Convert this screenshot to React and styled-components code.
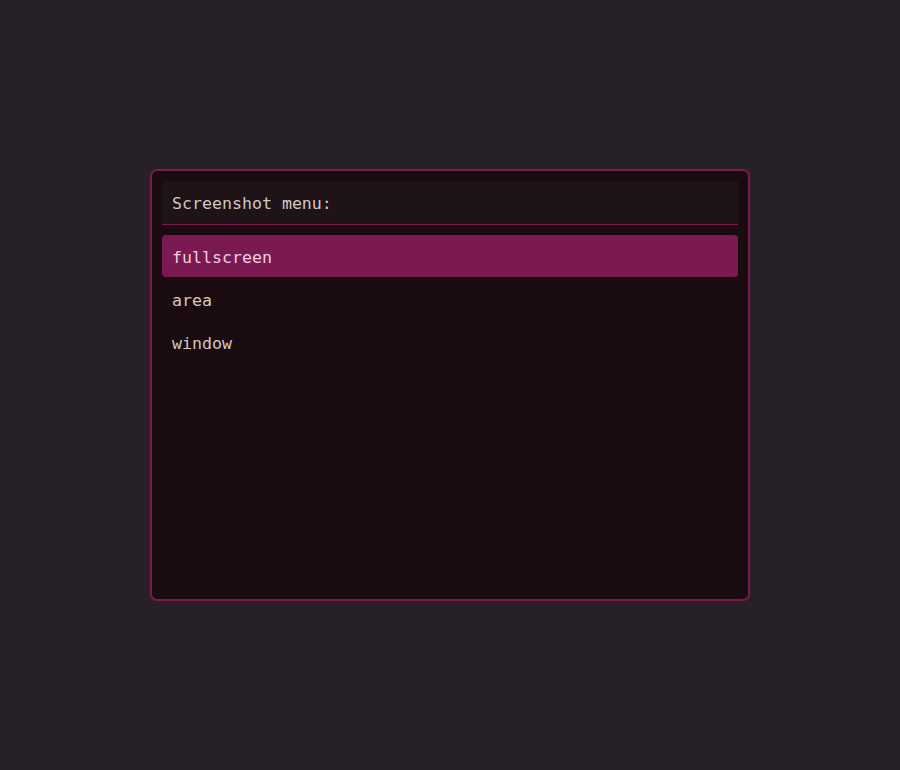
import React from 'react'
import styled, { createGlobalStyle } from 'styled-components'

const GlobalStyle = createGlobalStyle`
  html, body {
    margin: 0;
    padding: 0;
    background: #282027;
  }
`

const Screen = styled.div`
  align-items: center;
  display: flex;
  height: 100vh;
  justify-content: center;
  font-family: "DejaVu Sans Mono", monospace;
  font-size: 16.6px;
`

const Menu = styled.div`
  background: #190b10;
  border: 2px solid #7a1a50;
  border-radius: 7px;
  box-sizing: border-box;
  display: flex;
  flex-direction: column;
  height: 432px;
  padding: 10px;
  width: 600px;
`

const Prompt = styled.div`
  align-items: center;
  background: #1e1317;
  border-bottom: 1px solid #7a1a50;
  box-sizing: border-box;
  color: #d4c7c2;
  display: flex;
  height: 44px;
  margin-bottom: 10px;
  padding: 2px 0 0 10px;
`

const List = styled.div`
  display: flex;
  flex-direction: column;
  gap: 1px;
`

const Item = styled.div`
  align-items: center;
  background: ${(p) => (p.selected ? '#7a1a50' : 'transparent')};
  border-radius: 4px;
  box-sizing: border-box;
  color: ${(p) => (p.selected ? '#f4cde0' : '#d4c7c2')};
  display: flex;
  height: 42px;
  padding: 2px 0 0 10px;
`

const items = ['fullscreen', 'area', 'window']

export default function App() {
  return (
    <Screen>
      <GlobalStyle />
      <Menu>
        <Prompt>Screenshot menu:</Prompt>
        <List>
          {items.map((item, i) => (
            <Item key={item} selected={i === 0}>{item}</Item>
          ))}
        </List>
      </Menu>
    </Screen>
  )
}
